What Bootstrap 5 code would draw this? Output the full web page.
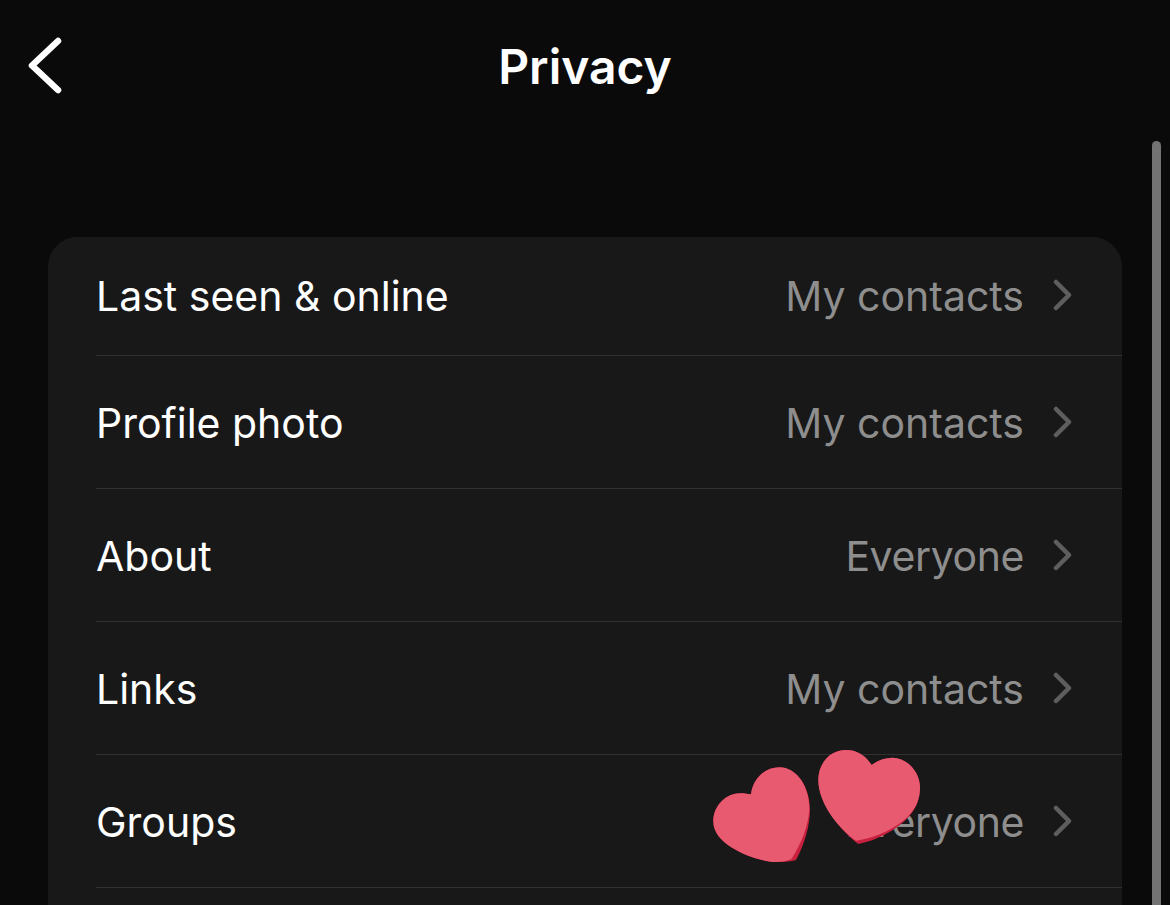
<!DOCTYPE html>
<html lang="en">
<head>
    <meta charset="UTF-8">
    <title>Privacy</title>
    <link href="https://cdn.jsdelivr.net/npm/bootstrap@5.3.0/dist/css/bootstrap.min.css" rel="stylesheet">
    <style>
        html, body { height: 905px; overflow: hidden; }
        body { background: #0a0a0a; font-family: Inter, "Noto Sans", sans-serif; position: relative; }
        .top-bar { height: 134px; position: relative; }
        .page-title { font-size: 48px; font-weight: 600; color: #fff; margin: 0; line-height: 1; }
        .settings-card { margin: 103px 48px 0; background: #181818; border-radius: 30px 30px 0 0; --bs-list-group-bg: #181818; --bs-list-group-border-width: 0; }
        .settings-item { background: #181818; padding: 0 0 0 48px; }
        .settings-row { height: 133px; border-bottom: 1px solid #303030; padding-right: 50px; padding-top: 2px; }
        .settings-item:first-child .settings-row { height: 119px; padding-top: 0; }
        .settings-item:last-child .settings-row { height: 17px; border-bottom: 0; padding: 0; }
        .row-label { font-size: 41px; color: #fff; line-height: 1; }
        .row-value { font-size: 41px; color: #8e8e8e; line-height: 1; }
        .value-tight { letter-spacing: -0.4px; }
        .row-chevron { margin-left: 28px; margin-bottom: 2px; display: block; }
        .page-scrollbar { position: absolute; left: 1152px; top: 141px; width: 9px; bottom: 0; background: #737373; border-radius: 5px 5px 0 0; }
        .hearts { position: absolute; left: 690px; top: 730px; }
    </style>
</head>
<body>
    <div class="top-bar d-flex align-items-center justify-content-center">
        <svg class="position-absolute top-0 start-0" width="80" height="134" viewBox="0 0 80 134" fill="none" stroke="#fff" stroke-width="6.5" stroke-linecap="round" stroke-linejoin="round"><path d="M58 41L32 65.5L58 90"/></svg>
        <h1 class="page-title">Privacy</h1>
    </div>

    <div class="list-group settings-card">
        <div class="list-group-item settings-item">
            <div class="settings-row d-flex align-items-center justify-content-between">
                <span class="row-label">Last seen &amp; online</span>
                <span class="d-flex align-items-center"><span class="row-value">My contacts</span><svg class="row-chevron" width="20" height="32" viewBox="0 0 20 32" fill="none" stroke="#5e5e5e" stroke-width="4.5" stroke-linecap="round" stroke-linejoin="round"><path d="M4 3L17 16L4 29"/></svg></span>
            </div>
        </div>
        <div class="list-group-item settings-item">
            <div class="settings-row d-flex align-items-center justify-content-between">
                <span class="row-label">Profile photo</span>
                <span class="d-flex align-items-center"><span class="row-value">My contacts</span><svg class="row-chevron" width="20" height="32" viewBox="0 0 20 32" fill="none" stroke="#5e5e5e" stroke-width="4.5" stroke-linecap="round" stroke-linejoin="round"><path d="M4 3L17 16L4 29"/></svg></span>
            </div>
        </div>
        <div class="list-group-item settings-item">
            <div class="settings-row d-flex align-items-center justify-content-between">
                <span class="row-label">About</span>
                <span class="d-flex align-items-center"><span class="row-value value-tight">Everyone</span><svg class="row-chevron" width="20" height="32" viewBox="0 0 20 32" fill="none" stroke="#5e5e5e" stroke-width="4.5" stroke-linecap="round" stroke-linejoin="round"><path d="M4 3L17 16L4 29"/></svg></span>
            </div>
        </div>
        <div class="list-group-item settings-item">
            <div class="settings-row d-flex align-items-center justify-content-between">
                <span class="row-label">Links</span>
                <span class="d-flex align-items-center"><span class="row-value">My contacts</span><svg class="row-chevron" width="20" height="32" viewBox="0 0 20 32" fill="none" stroke="#5e5e5e" stroke-width="4.5" stroke-linecap="round" stroke-linejoin="round"><path d="M4 3L17 16L4 29"/></svg></span>
            </div>
        </div>
        <div class="list-group-item settings-item">
            <div class="settings-row d-flex align-items-center justify-content-between">
                <span class="row-label">Groups</span>
                <span class="d-flex align-items-center"><span class="row-value value-tight">Everyone</span><svg class="row-chevron" width="20" height="32" viewBox="0 0 20 32" fill="none" stroke="#5e5e5e" stroke-width="4.5" stroke-linecap="round" stroke-linejoin="round"><path d="M4 3L17 16L4 29"/></svg></span>
            </div>
        </div>
        <div class="list-group-item settings-item">
            <div class="settings-row"></div>
        </div>
    </div>

    <div class="page-scrollbar"></div>

    <svg class="hearts" width="260" height="150" viewBox="0 0 780 450">
        <path fill="#c8213f" d="M183 193C190 140 230 112 268 112C320 112 360 170 360 240C360 290 340 350 318 390C290 398 250 398 225 392C170 380 70 340 70 275C70 225 110 190 150 190C165 190 175 192 183 193Z"/>
        <path fill="#e85a70" d="M183 193C190 140 230 112 268 112C320 112 358 170 358 235C356 285 335 340 305 386C285 397 250 398 225 392C170 380 70 340 70 275C70 225 110 190 150 190C165 190 175 192 183 193Z"/>
        <path fill="#c8213f" d="M545 105C525 75 500 60 468 60C420 60 385 100 385 150C385 220 450 300 505 342C560 332 620 300 655 262C680 235 690 205 690 172C690 125 650 83 608 83C585 83 565 90 545 105Z"/>
        <path fill="#e85a70" d="M545 105C525 75 500 60 468 60C420 60 385 100 385 150C385 220 445 295 498 332C560 322 620 295 655 258C680 232 690 205 690 172C690 125 650 83 608 83C585 83 565 90 545 105Z"/>
    </svg>

    <script src="https://cdn.jsdelivr.net/npm/bootstrap@5.3.0/dist/js/bootstrap.bundle.min.js"></script>
</body>
</html>
